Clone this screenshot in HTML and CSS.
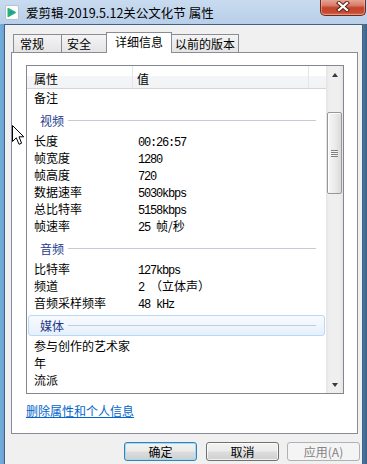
FILE: index.html
```html
<!DOCTYPE html>
<html lang="zh-CN">
<head>
<meta charset="utf-8">
<title>属性</title>
<link rel="stylesheet" href="styles.css">
</head>
<body>
<div class="window">
  <div class="titlebar">
    <div class="title-left">
      <svg class="app-icon" width="14" height="15" viewBox="0 0 14 15">
        <rect x="0.5" y="0.5" width="13" height="14" rx="1.5" fill="#fdfdfd" stroke="#b5c2cf"/>
        <path d="M2.5 3.5 Q2.5 2.5 3.5 3 L10.5 6.8 Q11.3 7.5 10.5 8.2 L3.5 12 Q2.5 12.5 2.5 11.5 Z" fill="#27b36a"/>
        <path d="M5 5.6 L9 7.5 L5 9.4 Z" fill="#1f8fe0"/>
      </svg>
      <span class="title">爱剪辑-2019.5.12关公文化节 属性</span>
    </div>
    <div class="close-btn">
      <svg width="14" height="11" viewBox="0 0 14 11">
        <path d="M3 2 L11 9 M11 2 L3 9" stroke="#5b2218" stroke-width="4.2" stroke-linecap="square"/>
        <path d="M3 2 L11 9 M11 2 L3 9" stroke="#ffffff" stroke-width="2.3" stroke-linecap="square"/>
      </svg>
    </div>
  </div>

  <div class="client">
    <div class="tabs">
      <div class="tab t1">常规</div>
      <div class="tab t2">安全</div>
      <div class="tab t3 active">详细信息</div>
      <div class="tab t4">以前的版本</div>
    </div>

    <div class="page">
      <div class="listbox">
        <div class="list-main">
          <div class="header">
            <div class="hcol hname">属性</div>
            <div class="hcol hvalue">值</div>
            <div class="hcol hrest"></div>
          </div>
          <div class="row"><span class="name">备注</span><span class="value"></span></div>
          <div class="section"><div class="section-box"><span class="section-title">视频</span><i class="section-line"></i></div></div>
          <div class="row"><span class="name">长度</span><span class="value">00:26:57</span></div>
          <div class="row"><span class="name">帧宽度</span><span class="value">1280</span></div>
          <div class="row"><span class="name">帧高度</span><span class="value">720</span></div>
          <div class="row"><span class="name">数据速率</span><span class="value">5030kbps</span></div>
          <div class="row"><span class="name">总比特率</span><span class="value">5158kbps</span></div>
          <div class="row"><span class="name">帧速率</span><span class="value">25 <span class="cjk">帧/秒</span></span></div>
          <div class="section"><div class="section-box"><span class="section-title">音频</span><i class="section-line"></i></div></div>
          <div class="row"><span class="name">比特率</span><span class="value">127kbps</span></div>
          <div class="row"><span class="name">频道</span><span class="value">2 <span class="cjk">（立体声）</span></span></div>
          <div class="row"><span class="name">音频采样频率</span><span class="value">48 kHz</span></div>
          <div class="section hl"><div class="section-box"><span class="section-title">媒体</span><i class="section-line"></i></div></div>
          <div class="row"><span class="name">参与创作的艺术家</span><span class="value"></span></div>
          <div class="row"><span class="name">年</span><span class="value"></span></div>
          <div class="row"><span class="name">流派</span><span class="value"></span></div>
        </div>
        <div class="scrollbar">
          <div class="sb-btn"><i class="arrow-up"></i></div>
          <div class="thumb"><i class="grip"></i></div>
          <div class="sb-space"></div>
          <div class="sb-btn"><i class="arrow-down"></i></div>
        </div>
      </div>
      <a class="link" href="#">删除属性和个人信息</a>
    </div>

    <div class="buttons">
      <div class="btn default">确定</div>
      <div class="btn cancel">取消</div>
      <div class="btn disabled">应用(A)</div>
    </div>
  </div>

  <svg class="cursor" width="13" height="21" viewBox="0 0 13 21">
    <path d="M0.5 0.5 L0.5 16.5 L4.3 12.8 L7 19.3 L9.6 18.2 L7 11.8 L11.8 11.8 Z" fill="#fff" stroke="#000" stroke-width="1" stroke-linejoin="miter"/>
  </svg>
</div>
</body>
</html>
```

FILE: styles.css
```css
* { box-sizing: border-box; }
html, body { margin: 0; padding: 0; }
body {
  width: 367px;
  height: 464px;
  overflow: hidden;
  font-family: "Noto Sans CJK SC", "Microsoft YaHei", sans-serif;
  font-size: 12px;
  color: #000;
}
.window {
  position: relative;
  width: 367px;
  height: 464px;
  display: flex;
  flex-direction: column;
  background: linear-gradient(to right, #74acd9 0, #6aa4d4 4px, #4f7aa3 362px, #3f6287 100%);
  overflow: hidden;
}

/* Title bar */
.titlebar {
  height: 24px;
  flex: none;
  display: flex;
  justify-content: space-between;
  align-items: flex-start;
  background: linear-gradient(#c8dbef, #b9cfe8);
}
.title-left {
  display: flex;
  align-items: center;
  height: 24px;
  padding-left: 5px;
  padding-top: 1px;
}
.app-icon { display: block; margin-right: 7px; }
.title {
  font-size: 12.5px;
  line-height: 16px;
  color: #000;
  white-space: nowrap;
}
.close-btn {
  width: 46px;
  height: 17px;
  margin-top: -1px;
  margin-right: 1px;
  border: 1px solid #6b2a20;
  border-top: none;
  border-radius: 0 0 5px 5px;
  background: linear-gradient(#e7aa9b 0%, #d77c68 40%, #c2442c 55%, #c94c30 85%, #d8745a 100%);
  box-shadow: inset 0 0 0 1px rgba(255, 200, 190, 0.45);
  display: flex;
  align-items: center;
  justify-content: center;
  padding-bottom: 2px;
}
.close-btn svg { display: block; }

/* Client area */
.client {
  flex: 1;
  margin: 0 4px;
  border: 1px solid #40618a;
  border-bottom: none;
  background: #f0f0f0;
  display: flex;
  flex-direction: column;
}

/* Tabs */
.tabs {
  display: flex;
  align-items: flex-end;
  height: 20px;
  margin-top: 7px;
  padding-left: 8px;
  flex: none;
}
.tab {
  position: relative;
  height: 18px;
  border: 1px solid #898c95;
  border-bottom: none;
  background: linear-gradient(#f4f4f4, #e4e4e4);
  line-height: 16px;
  padding-top: 1px;
  font-size: 12px;
  white-space: nowrap;
}
.t1 { width: 49px; padding-left: 6px; }
.t2 { width: 48px; margin-left: -1px; padding-left: 5px; }
.t3 { width: 66px; margin-left: -3px; padding-left: 8px; }
.t4 { width: 69px; margin-left: -2px; padding-left: 4px; }
.tab.active {
  height: 21px;
  margin-bottom: -1px;
  background: #fff;
  z-index: 1;
  padding-top: 1px;
}

/* Page */
.page {
  flex: none;
  margin-left: 6px;
  width: 347px;
  height: 382px;
  border: 1px solid #898c95;
  background: #fff;
  padding: 12px 0 0 14px;
}
.listbox {
  width: 318px;
  height: 329px;
  border: 1px solid #828790;
  display: flex;
  background: #fff;
}
.list-main {
  width: 299px;
  overflow: hidden;
}
.header {
  height: 23px;
  display: flex;
  border-bottom: 1px solid #d5d5d5;
  background: linear-gradient(#ffffff 0%, #ffffff 45%, #f4f5f7 46%, #f2f3f5 100%);
}
.hcol {
  height: 22px;
  line-height: 18px;
  padding-top: 4px;
}
.hname { width: 106px; padding-left: 7px; border-right: 1px solid #e3e5e8; }
.hvalue { width: 176px; padding-left: 4px; border-right: 1px solid #e3e5e8; }
.hrest { flex: 1; }

.row {
  display: flex;
  align-items: baseline;
  height: 17px;
  line-height: 17px;
  white-space: nowrap;
}
.row .name { width: 106px; padding-left: 7px; }
.row .value {
  padding-left: 5px;
  font-family: "Liberation Mono", "Noto Sans CJK SC", monospace;
  font-size: 12px;
  letter-spacing: -1.2px;
}
.row .value .cjk {
  font-family: "Noto Sans CJK SC", sans-serif;
  letter-spacing: 0;
}

.section {
  height: 26px;
  padding: 4px 1px 1px;
}
.section-box {
  height: 21px;
  display: flex;
  align-items: center;
  padding: 0 8px 0 11px;
  border: 1px solid transparent;
  border-radius: 3px;
}
.section-title {
  color: #1e3a8f;
  line-height: 16px;
}
.section-line {
  flex: 1;
  height: 1px;
  margin-left: 4px;
  margin-top: -1px;
  background: #c4ccd8;
}
.section.hl .section-box {
  border-color: #b9d7f7;
  background: linear-gradient(#f7fbff, #e6f0fb);
}

/* Scrollbar */
.scrollbar {
  width: 17px;
  display: flex;
  flex-direction: column;
  background: linear-gradient(to right, #e4e4e4 0, #efefef 3px, #efefef 13px, #e6e6e6 100%);
}
.sb-btn {
  height: 17px;
  flex: none;
  display: flex;
  align-items: center;
  justify-content: center;
}
.arrow-up {
  width: 0; height: 0;
  border-left: 3.5px solid transparent;
  border-right: 3.5px solid transparent;
  border-bottom: 4px solid #3a3a3a;
}
.arrow-down {
  width: 0; height: 0;
  border-left: 3.5px solid transparent;
  border-right: 3.5px solid transparent;
  border-top: 4px solid #3a3a3a;
}
.thumb {
  flex: none;
  margin: 29px 1px 0;
  height: 82px;
  border: 1px solid #979797;
  border-radius: 2px;
  background: linear-gradient(to right, #f6f6f6 0%, #ececec 50%, #dadada 100%);
  box-shadow: inset 1px 1px 0 #fff;
  display: flex;
  align-items: center;
  justify-content: center;
}
.grip {
  display: block;
  width: 7px;
  height: 7px;
  background: repeating-linear-gradient(#7f7f7f 0, #7f7f7f 1px, #f4f4f4 1px, #f4f4f4 2px);
}
.sb-space { flex: 1; }

/* Link */
.link {
  display: inline-block;
  margin-top: 9px;
  color: #0066cc;
  text-decoration: underline;
  line-height: 16px;
  font-size: 12px;
}

/* Buttons */
.buttons {
  display: flex;
  flex: none;
  margin-top: 8px;
  padding-left: 119px;
}
.btn {
  width: 73px;
  height: 19px;
  border: 1px solid #707070;
  border-radius: 3px;
  background: linear-gradient(#f3f3f3 0%, #ebebeb 48%, #dddddd 52%, #cfcfcf 100%);
  box-shadow: inset 0 0 0 1px rgba(255, 255, 255, 0.7);
  display: flex;
  align-items: center;
  justify-content: center;
  font-size: 12px;
  line-height: 16px;
}
.btn.default {
  border-color: #3c7fb1;
  box-shadow: inset 0 0 0 1px #9bdcf8;
}
.btn.cancel { margin-left: 9px; }
.btn.disabled {
  margin-left: 8px;
  border-color: #adb2b5;
  background: #f4f4f4;
  box-shadow: none;
  color: #838383;
}

/* Mouse pointer drawn in the screenshot */
.cursor {
  position: absolute;
  left: 12px;
  top: 125px;
  display: block;
}
```
